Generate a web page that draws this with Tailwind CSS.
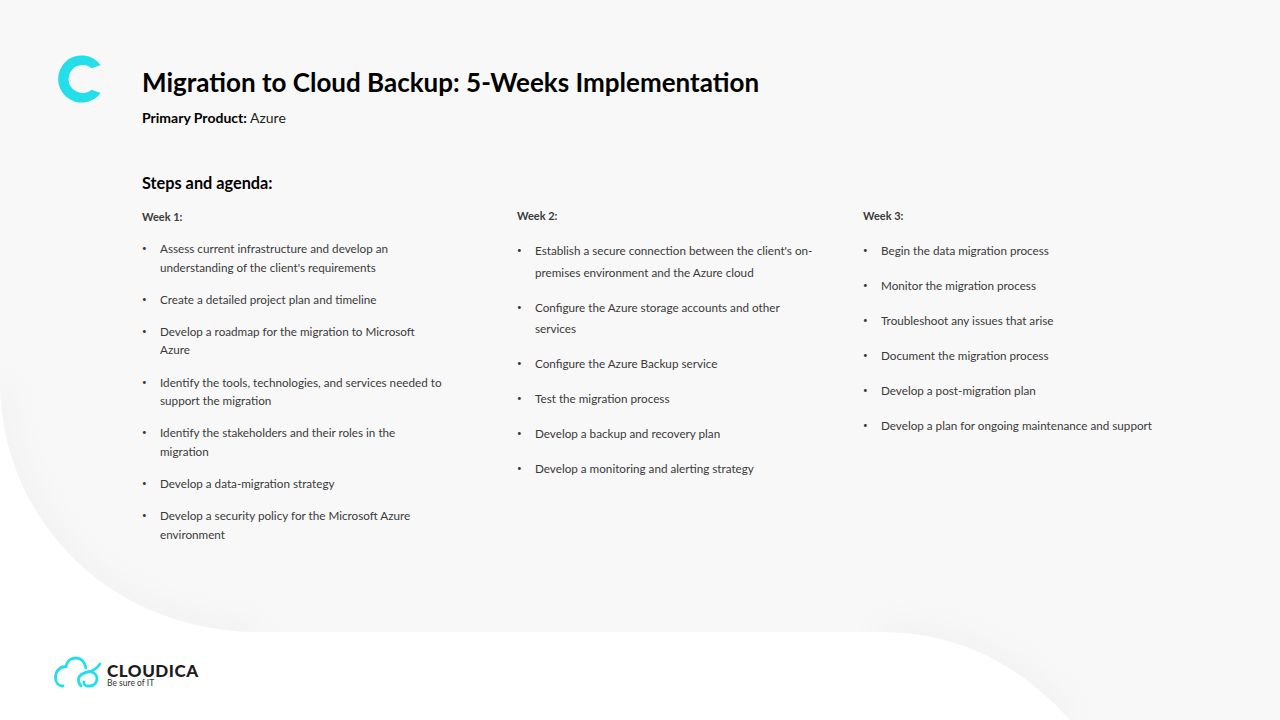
<!DOCTYPE html>
<html lang="en">
  <head>
    <meta charset="UTF-8" />
    <meta name="viewport" content="width=device-width, initial-scale=1.0" />
    <title>Migration to Cloud Backup</title>
    <script src="https://cdn.jsdelivr.net/npm/@tailwindcss/browser@4"></script>
  </head>
  <body class="bg-white font-['Lato',sans-serif]">
    <div class="relative w-[1280px] h-[720px] overflow-hidden bg-white">
      <!-- background shape -->
      <svg class="absolute inset-0" width="1280" height="720" viewBox="0 0 1280 720">
        <defs>
          <clipPath id="bgClip"><path d="M0 0H1280V720H1070C1020 665 960 632 880 632H260C110 632 0 520 0 380Z" /></clipPath>
          <filter id="soft"><feGaussianBlur stdDeviation="14" /></filter>
        </defs>
        <path d="M0 0H1280V720H1070C1020 665 960 632 880 632H260C110 632 0 520 0 380Z" fill="#f8f8f8" />
        <g clip-path="url(#bgClip)">
          <path d="M1070 720C1020 665 960 632 880 632M260 632C110 632 0 520 0 380" fill="none" stroke="#f1f1f1" stroke-width="20" filter="url(#soft)" />
        </g>
      </svg>

      <div class="relative h-full flex flex-col">
        <div class="flex pl-[58px] pt-[55px]">
          <svg class="w-[43px] h-[48px] shrink-0" viewBox="0 0 43 48">
            <path d="M42.7 10A23.6 23.6 0 1 0 42.7 38L33.6 34.7A14 14 0 1 1 33.6 13.3Z" fill="#24dfe9" />
          </svg>
          <div class="ml-[41px] pt-[8px]">
            <h1 class="text-[26px] leading-[38px] font-bold text-black whitespace-nowrap">Migration to Cloud Backup: 5-Weeks Implementation</h1>
            <p class="mt-[8px] text-[14px] leading-[18px] text-[#222]"><b class="text-black">Primary Product:</b> Azure</p>
          </div>
        </div>

        <div class="pl-[142px] mt-[46px]">
          <h2 class="text-[16.3px] leading-[20px] font-bold text-black">Steps and agenda:</h2>
          <div class="flex mt-[14px] text-[11.7px] text-[#3a3a3a]">
            <div class="w-[375px] shrink-0">
              <h3 class="pt-px text-[11px] font-bold leading-[18px]">Week 1:</h3>
              <ul class="mt-[13px] leading-[18.5px] flex flex-col gap-[13.7px]">
                <li class="flex"><span class="w-[18px] shrink-0 text-[8px]">•</span><span>Assess current infrastructure and develop an<br />understanding of the client's requirements</span></li>
                <li class="flex"><span class="w-[18px] shrink-0 text-[8px]">•</span><span>Create a detailed project plan and timeline</span></li>
                <li class="flex"><span class="w-[18px] shrink-0 text-[8px]">•</span><span>Develop a roadmap for the migration to Microsoft<br />Azure</span></li>
                <li class="flex"><span class="w-[18px] shrink-0 text-[8px]">•</span><span>Identify the tools, technologies, and services needed to<br />support the migration</span></li>
                <li class="flex"><span class="w-[18px] shrink-0 text-[8px]">•</span><span>Identify the stakeholders and their roles in the<br />migration</span></li>
                <li class="flex"><span class="w-[18px] shrink-0 text-[8px]">•</span><span>Develop a data-migration strategy</span></li>
                <li class="flex"><span class="w-[18px] shrink-0 text-[8px]">•</span><span>Develop a security policy for the Microsoft Azure<br />environment</span></li>
              </ul>
            </div>
            <div class="w-[346px] shrink-0">
              <h3 class="text-[11px] font-bold leading-[18px]">Week 2:</h3>
              <ul class="mt-[15px] leading-[21.5px] flex flex-col gap-[13.5px]">
                <li class="flex"><span class="w-[18px] shrink-0 text-[8px]">•</span><span>Establish a secure connection between the client's on-<br />premises environment and the Azure cloud</span></li>
                <li class="flex"><span class="w-[18px] shrink-0 text-[8px]">•</span><span>Configure the Azure storage accounts and other<br />services</span></li>
                <li class="flex"><span class="w-[18px] shrink-0 text-[8px]">•</span><span>Configure the Azure Backup service</span></li>
                <li class="flex"><span class="w-[18px] shrink-0 text-[8px]">•</span><span>Test the migration process</span></li>
                <li class="flex"><span class="w-[18px] shrink-0 text-[8px]">•</span><span>Develop a backup and recovery plan</span></li>
                <li class="flex"><span class="w-[18px] shrink-0 text-[8px]">•</span><span>Develop a monitoring and alerting strategy</span></li>
              </ul>
            </div>
            <div>
              <h3 class="text-[11px] font-bold leading-[18px]">Week 3:</h3>
              <ul class="mt-[15px] leading-[21.5px] flex flex-col gap-[13.5px]">
                <li class="flex"><span class="w-[18px] shrink-0 text-[8px]">•</span><span>Begin the data migration process</span></li>
                <li class="flex"><span class="w-[18px] shrink-0 text-[8px]">•</span><span>Monitor the migration process</span></li>
                <li class="flex"><span class="w-[18px] shrink-0 text-[8px]">•</span><span>Troubleshoot any issues that arise</span></li>
                <li class="flex"><span class="w-[18px] shrink-0 text-[8px]">•</span><span>Document the migration process</span></li>
                <li class="flex"><span class="w-[18px] shrink-0 text-[8px]">•</span><span>Develop a post-migration plan</span></li>
                <li class="flex"><span class="w-[18px] shrink-0 text-[8px]">•</span><span>Develop a plan for ongoing maintenance and support</span></li>
              </ul>
            </div>
          </div>
        </div>

        <!-- footer logo -->
        <div class="absolute left-[54px] top-[656px] flex items-start">
          <svg class="w-[48px] h-[33px] shrink-0" viewBox="0 0 48 33" fill="none" stroke="#24dfe9" stroke-width="2.8" stroke-linecap="round">
            <path d="M9 30C4 30 1.5 26 1.5 21.5C1.5 15 6 10.5 12 10.5C13 5 17 2 21.5 2C27 2 31 6 32 12" />
            <path d="M46 8C43 12 40 14.5 36 15.5C30 16.5 25 18 24.5 23C24.3 26 25.5 28.5 27 30" />
            <path d="M36 15.5C40 16 43 19 43 22.5C43 26.5 40 30 36 30H33C31 30 29.5 28 30 26" />
          </svg>
          <div class="ml-[5px] pt-[6px]">
            <div class="text-[17px] leading-[17px] font-black tracking-[0.55px] text-[#1c1c1c]">CLOUDICA</div>
            <div class="text-[8.5px] leading-[9px] text-[#333]">Be sure of IT</div>
          </div>
        </div>
      </div>
    </div>
  </body>
</html>
